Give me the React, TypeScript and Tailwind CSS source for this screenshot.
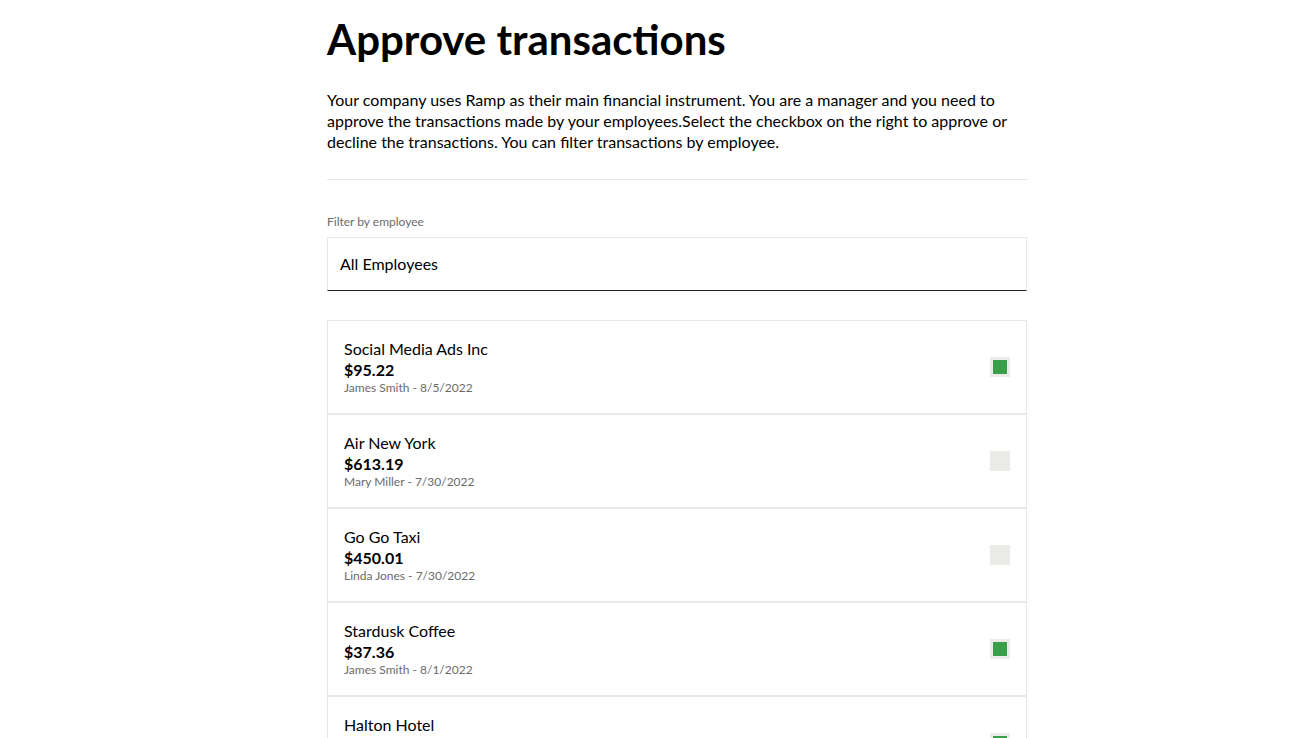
import React from "react";

const txs = [
  { name: "Social Media Ads Inc", amount: "$95.22", meta: "James Smith - 8/5/2022", checked: true },
  { name: "Air New York", amount: "$613.19", meta: "Mary Miller - 7/30/2022", checked: false },
  { name: "Go Go Taxi", amount: "$450.01", meta: "Linda Jones - 7/30/2022", checked: false },
  { name: "Stardusk Coffee", amount: "$37.36", meta: "James Smith - 8/1/2022", checked: true },
  { name: "Halton Hotel", amount: "$1,024.00", meta: "Mary Miller - 7/28/2022", checked: true },
];

export default function App() {
  return (
    <div className="min-h-screen bg-white text-black" style={{ fontFamily: "Lato, 'Noto Sans', sans-serif" }}>
      <div className="ml-[327px] w-[700px] pt-[9px]">
        <h1 className="text-[42px] font-bold leading-[60px]">Approve transactions</h1>
        <p className="mt-[20px] text-[16px] leading-[21px]">
          Your company uses Ramp as their main financial instrument. You are a manager and you need to approve the
          transactions made by your employees.Select the checkbox on the right to approve or decline the transactions.
          You can filter transactions by employee.
        </p>
        <div className="mt-[27px] h-px bg-[#e8e8e8]" />
        <div className="mt-[34px] text-[12px] leading-[16px] text-[#6b6b6b]">Filter by employee</div>
        <div className="mt-[7px] flex h-[54px] items-center border border-[#e8e8e8] border-b-[#222] px-[12px] text-[16px]">
          All Employees
        </div>
        <div className="mt-[29px] flex flex-col">
          {txs.map((t) => (
            <div
              key={t.name}
              className="flex h-[94px] items-center justify-between border border-[#e8e8e8] pl-[16px] pr-[16px]"
            >
              <div className="flex flex-col">
                <div className="text-[16px] leading-[21px]">{t.name}</div>
                <div className="text-[16px] font-bold leading-[21px]">{t.amount}</div>
                <div className="text-[12px] leading-[16px] text-[#6b6b6b]">{t.meta}</div>
              </div>
              <div className="flex h-[20px] w-[20px] items-center justify-center bg-[#ebebe7]">
                {t.checked && <div className="h-[14px] w-[14px] bg-[#3a9d47]" />}
              </div>
            </div>
          ))}
        </div>
      </div>
    </div>
  );
}
